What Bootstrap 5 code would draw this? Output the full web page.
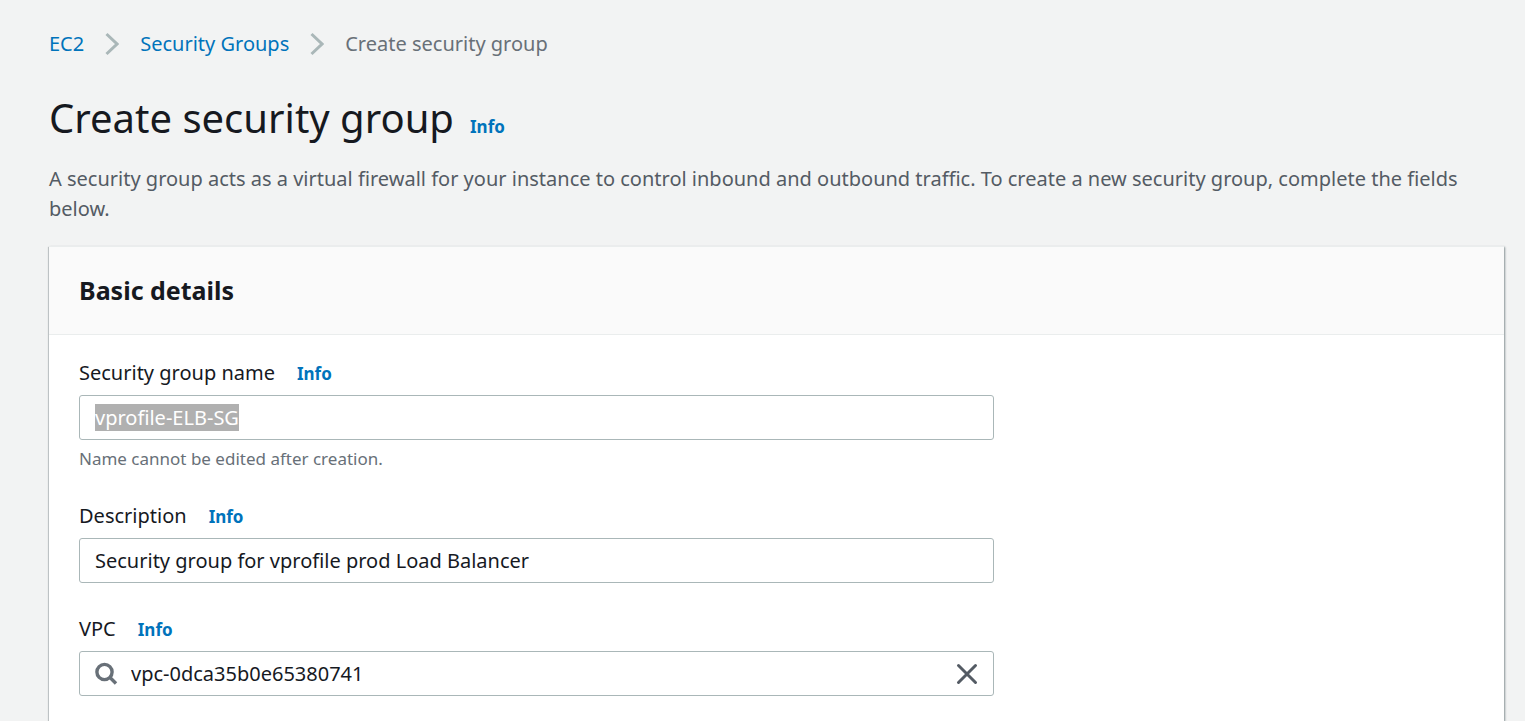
<!DOCTYPE html>
<html lang="en">
<head>
<meta charset="utf-8">
<meta name="viewport" content="width=device-width, initial-scale=1">
<title>Create security group</title>
<link href="https://cdn.jsdelivr.net/npm/bootstrap@5.3.0/dist/css/bootstrap.min.css" rel="stylesheet">
<style>
  body { background: #f2f3f3; color: #16191f; font: 20px/30px "Noto Sans", sans-serif; }
  a { color: #0073bb; text-decoration: none; }
  a:hover { text-decoration: underline; }
  .page { padding: 29px 21px 0 49px; }
  .crumbs { gap: 21px; margin-bottom: 29px; }
  .crumbs li { gap: 21px; }
  .crumbs .current { color: #687078; }
  .page-title { font-size: 40px; line-height: 60px; font-weight: 400; }
  .info { font-size: 17px; line-height: 30px; font-weight: 700; }
  .intro { color: #545b64; margin: 16px 0 22px; }
  .panel { border: 0; border-top: 1px solid #eaeded; border-radius: 0; box-shadow: 0 1px 1px 0 rgba(0,28,36,.3), 1px 1px 2px 0 rgba(0,28,36,.4), -1px 1px 1px 0 rgba(0,28,36,.15); }
  .panel-head { background: #fafafa; border-bottom: 1px solid #eaeded; padding: 28px 30px; }
  .panel-head h2 { font-size: 25px; line-height: 31px; font-weight: 700; }
  .panel-body { padding: 23px 30px 20px; }
  .fields { --bs-gutter-x: 44px; }
  .field-stack { gap: 31px; }
  .field-label { gap: 22px; margin-bottom: 6px; }
  .field { height: 45px; border: 1px solid #aab7b8; border-radius: 3px; padding: 0 15px; font-size: 20px; color: #16191f; background: #fff; }
  .field:focus { border-color: #aab7b8; box-shadow: none; color: #16191f; }
  .field::selection { background: #b0b0b0; color: #fff; }
  .with-icons { padding: 0 51px; }
  .hint { font-size: 17px; line-height: 22px; color: #687078; margin-top: 8px; }
  .search-icon { left: 16px; }
  .clear { right: 16px; border: 0; padding: 0; background: none; }
</style>
</head>
<body>
<div class="page d-flex flex-column min-vh-100">
  <nav aria-label="Breadcrumb">
    <ol class="crumbs list-unstyled d-flex align-items-center">
      <li class="d-flex align-items-center"><a href="#">EC2</a>
        <svg width="14" height="24" viewBox="0 0 14 24" fill="none" stroke="#aab7b8" stroke-width="3" aria-hidden="true"><path d="M1.5 2 12 12 1.5 22"/></svg></li>
      <li class="d-flex align-items-center"><a href="#">Security Groups</a>
        <svg width="14" height="24" viewBox="0 0 14 24" fill="none" stroke="#aab7b8" stroke-width="3" aria-hidden="true"><path d="M1.5 2 12 12 1.5 22"/></svg></li>
      <li class="current" aria-current="page">Create security group</li>
    </ol>
  </nav>
  <header>
    <div class="d-flex align-items-baseline gap-3">
      <h1 class="page-title mb-0">Create security group</h1>
      <a class="info" href="#">Info</a>
    </div>
    <p class="intro">A security group acts as a virtual firewall for your instance to control inbound and outbound traffic. To create a new security group, complete the fields below.</p>
  </header>
  <section class="panel card flex-grow-1">
    <div class="panel-head"><h2 class="mb-0">Basic details</h2></div>
    <form class="panel-body">
      <div class="fields row">
        <div class="field-stack col-8 d-flex flex-column">
          <div>
            <div class="field-label d-flex align-items-baseline"><label for="sg-name">Security group name</label><a class="info" href="#">Info</a></div>
            <input class="field form-control" id="sg-name" type="text" value="vprofile-ELB-SG" aria-describedby="sg-hint" spellcheck="false">
            <div class="hint" id="sg-hint">Name cannot be edited after creation.</div>
          </div>
          <div>
            <div class="field-label d-flex align-items-baseline"><label for="sg-desc">Description</label><a class="info" href="#">Info</a></div>
            <input class="field form-control" id="sg-desc" type="text" value="Security group for vprofile prod Load Balancer">
          </div>
          <div>
            <div class="field-label d-flex align-items-baseline"><label for="sg-vpc">VPC</label><a class="info" href="#">Info</a></div>
            <div class="position-relative">
              <svg class="search-icon position-absolute top-50 translate-middle-y" width="24" height="24" viewBox="0 0 24 24" fill="none" stroke="#687078" stroke-width="3.4" aria-hidden="true"><circle cx="9.5" cy="10" r="7.6"/><path d="m15 15.5 6 6"/></svg>
              <input class="field with-icons form-control" id="sg-vpc" type="text" value="vpc-0dca35b0e65380741">
              <button class="clear position-absolute top-50 translate-middle-y d-flex" type="button" aria-label="Clear VPC"><svg width="22" height="22" viewBox="0 0 22 22" fill="none" stroke="#545b64" stroke-width="3" stroke-linecap="round" aria-hidden="true"><path d="m2.5 2.5 17 17m0-17-17 17"/></svg></button>
            </div>
          </div>
        </div>
      </div>
    </form>
  </section>
</div>
<script src="https://cdn.jsdelivr.net/npm/bootstrap@5.3.0/dist/js/bootstrap.bundle.min.js"></script>
<script>
  const nameField = document.getElementById('sg-name');
  nameField.focus();
  nameField.select();
</script>
</body>
</html>
